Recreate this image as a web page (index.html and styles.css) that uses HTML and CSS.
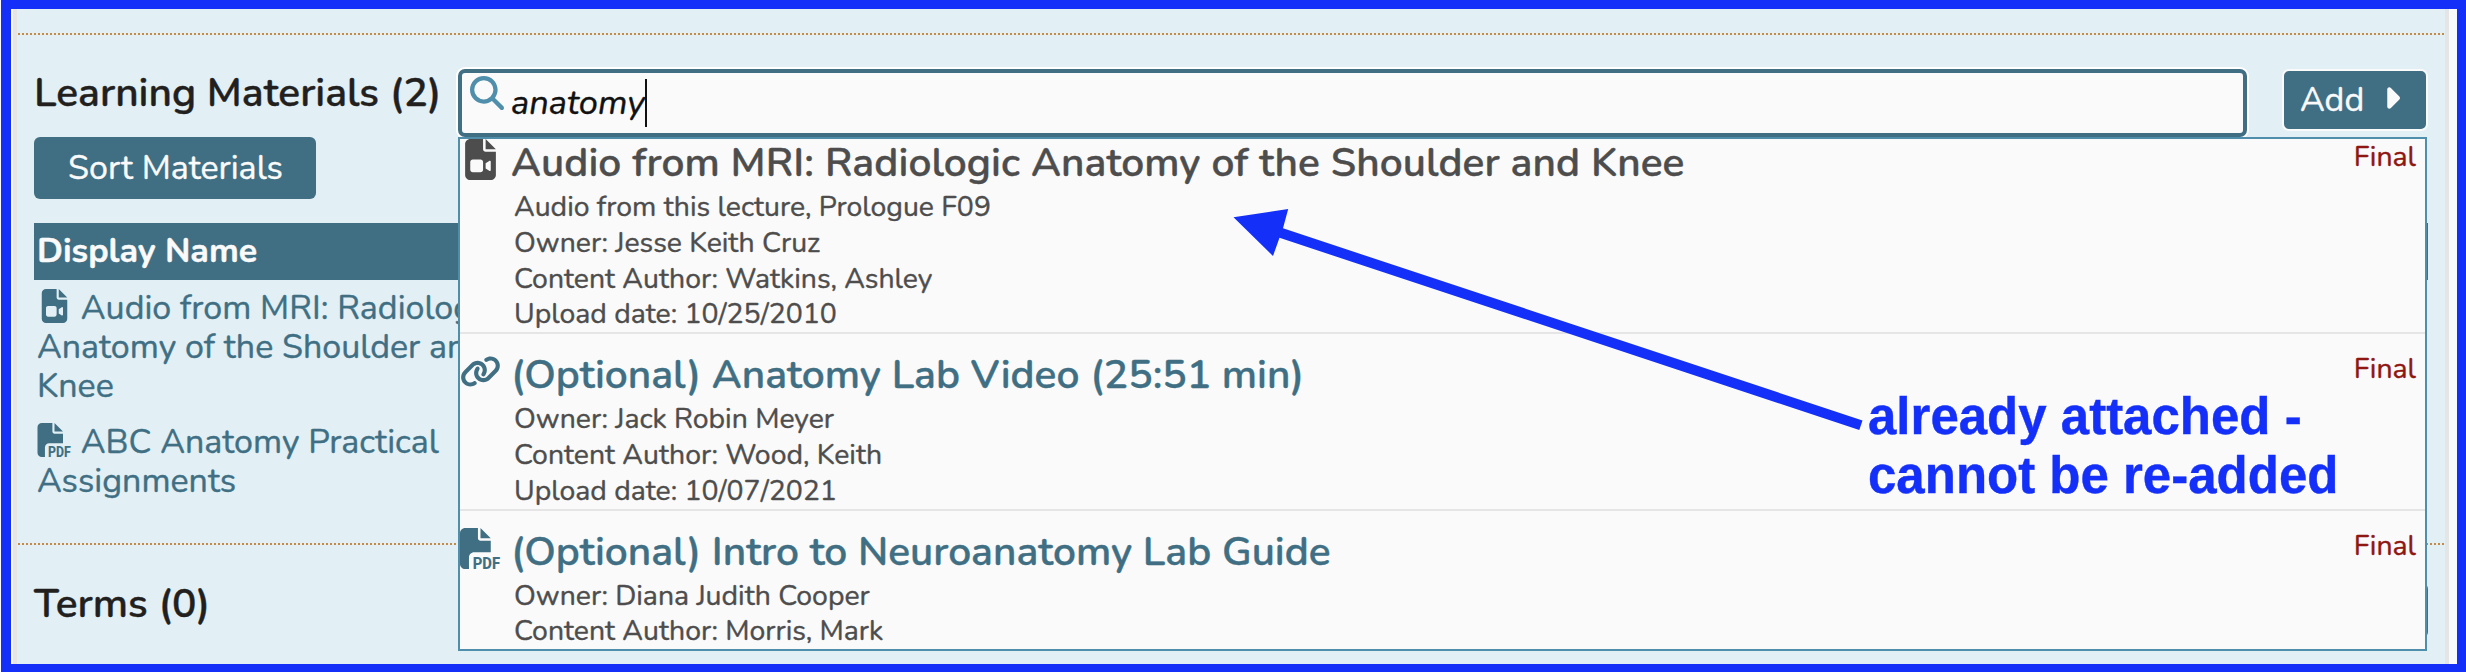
FILE: index.html
```html
<!DOCTYPE html>
<html lang="en">
<head>
<meta charset="utf-8">
<title>Learning Materials</title>
<link rel="stylesheet" href="styles.css">
</head>
<body>
<svg class="sprite" aria-hidden="true">
  <symbol id="file-video" viewBox="0 0 384 512"><path d="M64 0C28.7 0 0 28.7 0 64V448c0 35.3 28.7 64 64 64H320c35.3 0 64-28.7 64-64V160H256c-17.7 0-32-14.3-32-32V0H64zM256 0V128H384L256 0zM64 288c0-17.7 14.3-32 32-32h96c17.7 0 32 14.3 32 32v96c0 17.7-14.3 32-32 32H96c-17.7 0-32-14.3-32-32V288zM300.9 397.9L256 368V304l44.9-29.9c2-1.3 4.4-2.1 6.8-2.1c6.8 0 12.3 5.5 12.3 12.3V387.7c0 6.8-5.5 12.3-12.3 12.3c-2.4 0-4.8-.7-6.8-2.1z"/></symbol>
  <symbol id="file-pdf" viewBox="0 0 512 512"><path d="M0 64C0 28.7 28.7 0 64 0H224V128c0 17.7 14.3 32 32 32H384V304H176c-35.3 0-64 28.7-64 64V512H64c-35.3 0-64-28.7-64-64V64zm384 64H256V0L384 128z"/><text class="pdf-label" x="158" y="508" textLength="342" lengthAdjust="spacingAndGlyphs">PDF</text></symbol>
  <symbol id="link" viewBox="0 0 640 512"><path d="M579.8 267.7c56.5-56.5 56.5-148 0-204.5c-50-50-128.8-56.5-186.3-15.4l-1.6 1.1c-14.4 10.3-17.7 30.3-7.4 44.6s30.3 17.7 44.6 7.4l1.6-1.1c32.1-22.9 76-19.3 103.8 8.6c31.5 31.5 31.5 82.5 0 114L422.3 334.8c-31.5 31.5-82.5 31.5-114 0c-27.9-27.9-31.5-71.8-8.6-103.8l1.1-1.6c10.3-14.4 6.9-34.4-7.4-44.6s-34.4-6.9-44.6 7.4l-1.1 1.6C206.5 251.2 213 330 263 380c56.5 56.5 148 56.5 204.5 0L579.8 267.7zM60.2 244.3c-56.5 56.5-56.5 148 0 204.5c50 50 128.8 56.5 186.3 15.4l1.6-1.1c14.4-10.3 17.7-30.3 7.4-44.6s-30.3-17.7-44.6-7.4l-1.6 1.1c-32.1 22.9-76 19.3-103.8-8.6C74 372 74 321 105.5 289.5L217.7 177.2c31.5-31.5 82.5-31.5 114 0c27.9 27.9 31.5 71.8 8.6 103.9l-1.1 1.6c-10.3 14.4-6.9 34.4 7.4 44.6s34.4 6.9 44.6-7.4l1.1-1.6C433.5 260.8 427 182 377 132c-56.5-56.5-148-56.5-204.5 0L60.2 244.3z"/></symbol>
  <symbol id="search" viewBox="0 0 512 512"><path d="M416 208c0 45.9-14.9 88.3-40 122.7L502.6 457.4c12.5 12.5 12.5 32.8 0 45.3s-32.8 12.5-45.3 0L330.7 376c-34.4 25.2-76.8 40-122.7 40C93.1 416 0 322.9 0 208S93.1 0 208 0S416 93.1 416 208zM208 352a144 144 0 1 0 0-288 144 144 0 1 0 0 288z"/></symbol>
  <symbol id="caret-right" viewBox="0 0 256 512"><path d="M246.6 278.6c12.5-12.5 12.5-32.8 0-45.3l-128-128c-9.2-9.2-22.9-11.9-34.9-6.9s-19.8 16.6-19.8 29.6l0 256c0 12.9 7.8 24.6 19.8 29.6s25.7 2.2 34.9-6.9l128-128z"/></symbol>
</svg>

<div class="frame">
  <main class="panel">
    <section class="block materials">
      <header class="block-head">
        <h2 class="title">Learning Materials (2)</h2>
        <div class="search">
          <div class="search-box">
            <svg class="search-icon"><use href="#search"/></svg>
            <span class="query">anatomy</span><span class="caret"></span>
          </div>
          <ul class="results">
            <li class="result used">
              <svg class="result-icon"><use href="#file-video"/></svg>
              <div class="result-body">
                <h3 class="result-title">Audio from MRI: Radiologic Anatomy of the Shoulder and Knee</h3>
                <p class="meta">Audio from this lecture, Prologue F09</p>
                <p class="meta">Owner: Jesse Keith Cruz</p>
                <p class="meta">Content Author: Watkins, Ashley</p>
                <p class="meta">Upload date: 10/25/2010</p>
              </div>
              <span class="status">Final</span>
            </li>
            <li class="result">
              <svg class="result-icon"><use href="#link"/></svg>
              <div class="result-body">
                <h3 class="result-title">(Optional) Anatomy Lab Video (25:51 min)</h3>
                <p class="meta">Owner: Jack Robin Meyer</p>
                <p class="meta">Content Author: Wood, Keith</p>
                <p class="meta">Upload date: 10/07/2021</p>
              </div>
              <span class="status">Final</span>
            </li>
            <li class="result">
              <svg class="result-icon"><use href="#file-pdf"/></svg>
              <div class="result-body">
                <h3 class="result-title">(Optional) Intro to Neuroanatomy Lab Guide</h3>
                <p class="meta">Owner: Diana Judith Cooper</p>
                <p class="meta">Content Author: Morris, Mark</p>
              </div>
              <span class="status">Final</span>
            </li>
          </ul>
        </div>
        <button class="btn add">Add<svg class="add-caret"><use href="#caret-right"/></svg></button>
      </header>
      <button class="btn sort">Sort Materials</button>
      <div class="table">
        <div class="table-head">Display Name</div>
        <a class="row"><svg class="row-icon"><use href="#file-video"/></svg> Audio from MRI: Radiologic<br>Anatomy of the Shoulder and<br>Knee</a>
        <a class="row"><svg class="row-icon"><use href="#file-pdf"/></svg> ABC Anatomy Practical<br>Assignments</a>
      </div>
    </section>
    <section class="block terms">
      <header class="block-head">
        <h2 class="title">Terms (0)</h2>
        <span class="btn manage"></span>
      </header>
    </section>
  </main>
</div>

<svg class="arrow" viewBox="0 0 640 230">
  <polygon points="5.5,17.3 60.2,9 55,28.3 634.5,220.4 631.3,230 51.5,37.8 45,56"/>
</svg>
<p class="note">already attached -<br>cannot be re-added</p>
</body>
</html>
```
FILE: styles.css
```css
* { box-sizing: border-box; margin: 0; padding: 0; }

body {
  position: relative;
  width: 2466px;
  height: 672px;
  overflow: hidden;
  background: #fafafa;
  color: #221f1f;
  font: 400 34px/39px Nunito, Lato, sans-serif;
  -webkit-text-stroke: 0.4px;
}

.sprite { display: none; }
svg { fill: currentColor; -webkit-text-stroke: 0; }
.pdf-label { font: 800 215px Roboto, sans-serif; }

.frame {
  height: 672px;
  margin-left: 1px;
  padding: 0 8px 0 2px;
  border: solid #1430f8;
  border-width: 9px 9px 8px 10px;
  background: #fafafa;
}
.panel {
  height: 655px;
  padding: 24px 1px 0 1px;
  border: solid #e5e5e5;
  border-width: 0 4px;
  background: #e2eff4;
  overflow: hidden;
}

.block {
  height: 510px;
  padding: 37px 16px 0;
  background: repeating-linear-gradient(90deg, #c58b45 0 2px, transparent 2px 4px) 0 0 / 100% 2px no-repeat;
}
.block.materials { padding-top: 36px; }
.block-head { display: flex; align-items: flex-start; height: 68px; }
.title {
  flex: none;
  width: 424px;
  margin-top: -1px;
  font-size: 40.7px;
  font-weight: 600;
  line-height: 50px;
  white-space: nowrap;
}

.search { position: relative; width: 1789px; margin-right: 35px; }
.search-box {
  display: flex;
  height: 68px;
  padding: 3px 8px;
  border: 4px solid #406f84;
  border-radius: 7px;
  background: #fafafa;
  box-shadow: 0 0 0 2px #fff;
}
.search-icon { width: 34px; height: 34px; color: #4f8fab; }
.query {
  margin: 3px 0 0 7px;
  color: #111;
  font-size: 34.4px;
  font-style: italic;
  line-height: 48px;
}
.caret { width: 2px; height: 48px; margin-top: 3px; background: #111; }

.results {
  position: absolute;
  top: 68px;
  left: 0;
  z-index: 2;
  width: 1969px;
  height: 514px;
  border: 2px solid #4f8fab;
  background: #fafafa;
  list-style: none;
  overflow: hidden;
}
.result {
  display: flex;
  padding: 17px 9px 0 0;
  border-bottom: 2px solid #e5e5e5;
  color: #406f84;
}
.result:first-child { margin-top: -17px; }
.result.used { color: #4d4d4d; }
.result-icon { width: 41px; height: 41px; }
.result-body { flex: 1; padding-left: 10px; }
.result-title { margin: -1px 0 1px; font-size: 40.7px; font-weight: 600; line-height: 50px; }
.used .result-title { letter-spacing: 0.08px; }
.meta { padding-left: 3px; color: #4d4d4d; font-size: 28.4px; line-height: 35.8px; }
.status { color: #8f1713; font-size: 28.4px; line-height: 36px; }

.btn {
  display: flex;
  align-items: center;
  border: 0;
  border-radius: 6px;
  background: #406f84;
  color: #fafafa;
  font: inherit;
}
.add { width: 146px; height: 62px; padding: 0 0 0 16px; border: 2px solid #fafafa; border-radius: 7px; }
.add-caret { width: 17px; height: 34px; margin: 0 0 5px 19px; }
.sort { justify-content: center; width: 282px; height: 62px; padding-left: 1px; }
.manage { width: 146px; height: 55px; margin: 3px 0 0 1824px; }

.table { margin-top: 24px; }
.table-head {
  height: 57px;
  margin-bottom: 9px;
  padding-left: 3px;
  background: #406f84;
  color: #fafafa;
  font-weight: 700;
  line-height: 57px;
}
.row { display: block; margin-bottom: 17px; padding-left: 3px; color: #406f84; }
.row-icon { width: 35px; height: 34px; vertical-align: -4px; }

/* Annotation drawn over the results list */
.arrow { position: absolute; top: 200px; left: 1228px; z-index: 3; width: 640px; height: 230px; color: #1430f8; overflow: visible; }
.note {
  position: absolute;
  top: 387px;
  left: 1868px;
  z-index: 3;
  color: #1430f8;
  font: 700 51px/59px "Liberation Sans", Arial, sans-serif;
  white-space: nowrap;
}
```
